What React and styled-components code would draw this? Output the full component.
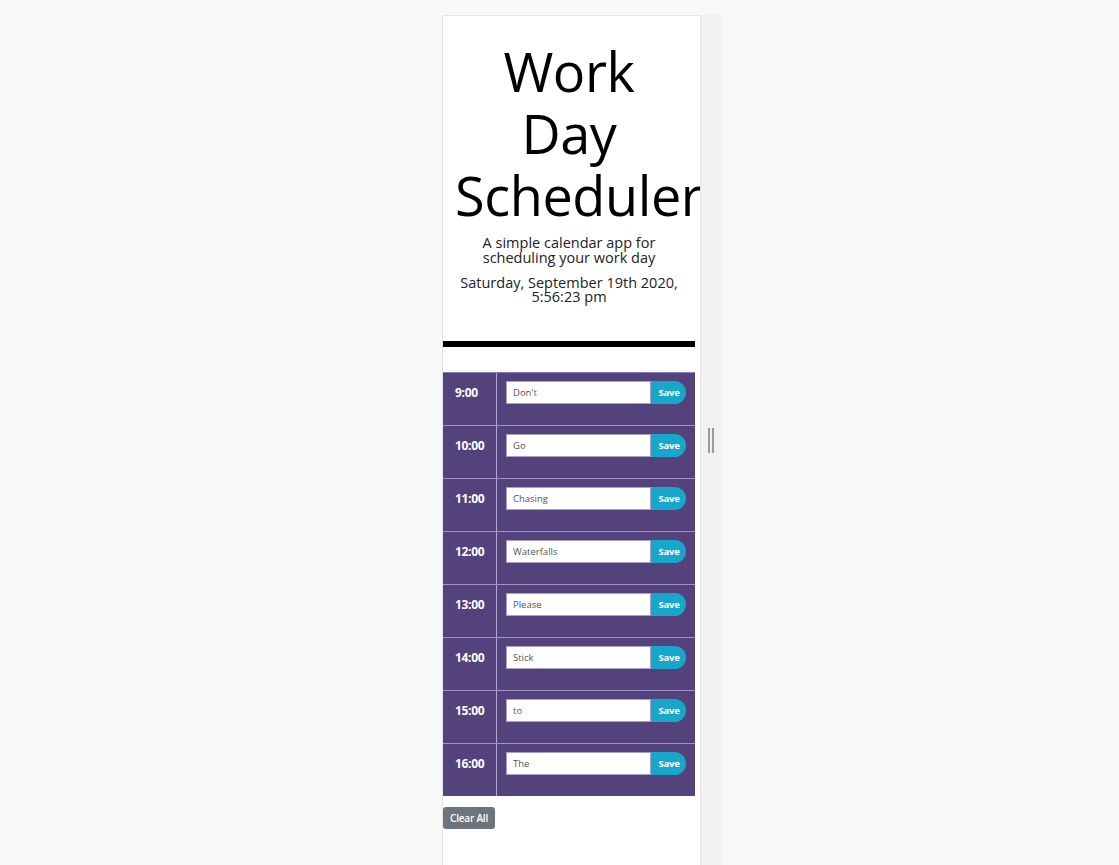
import React from "react";
import styled, { createGlobalStyle } from "styled-components";

const GlobalStyle = createGlobalStyle`
  html, body {
    margin: 0;
    padding: 0;
    background: #f8f8f8;
    font-family: "Open Sans", "Liberation Sans", sans-serif;
  }
`;

const Stage = styled.div`
  display: flex;
  align-items: stretch;
  padding: 15px 0 0 442px;
  height: 850px;
`;

const Frame = styled.div`
  width: 259px;
  background: #fff;
  border: 1px solid #e4e4e4;
  border-bottom: none;
  box-sizing: border-box;
  overflow: hidden;
`;

const Gutter = styled.div`
  width: 20px;
  background: #f1f1f1;
  display: flex;
  justify-content: center;
  gap: 2px;
  padding-top: 413px;
  box-sizing: border-box;
`;

const Grip = styled.span`
  width: 2px;
  height: 25px;
  background: #9a9a9a;
`;

const Header = styled.header`
  width: 252px;
  padding: 24px 12px 0;
  box-sizing: border-box;
  text-align: center;
  color: #000;
`;

const Title = styled.h1`
  margin: 0;
  font-size: 54px;
  font-weight: 400;
  line-height: 62px;
  letter-spacing: -0.4px;
  text-align: center;
`;

const Lead = styled.p`
  margin: ${(p) => p.$top}px -20px 0;
  font-size: 14.5px;
  line-height: ${(p) => p.$line}px;
  color: #222;
`;

const Rule = styled.div`
  width: 252px;
  height: 6px;
  background: #000;
  margin-top: 37px;
`;

const Table = styled.div`
  width: 252px;
  margin-top: 25px;
  background: #53427b;
`;

const Row = styled.div`
  display: flex;
  height: 53px;
  border-top: 1px solid #a094c8;
  box-sizing: border-box;
  &:first-child {
    border-top-color: #8a7db5;
  }
`;

const Hour = styled.div`
  width: 54px;
  border-right: 1px solid #b4aad6;
  box-sizing: border-box;
  color: #fff;
  font-weight: 700;
  font-size: 12px;
  padding: 11px 0 0 12px;
  letter-spacing: -0.3px;
`;

const Cell = styled.div`
  flex: 1;
  display: flex;
  align-items: flex-start;
  padding: 8px 0 0 9px;
`;

const Field = styled.input`
  width: 145px;
  height: 23px;
  box-sizing: border-box;
  border: 1px solid #a99fc9;
  background: #fff;
  font-family: "Open Sans", "Liberation Sans", sans-serif;
  font-size: 9.5px;
  color: #555;
  padding: 0 6px;
  outline: none;
`;

const SaveButton = styled.button`
  width: 35px;
  height: 23px;
  border: none;
  border-radius: 0 12px 12px 0;
  background: #17a7cb;
  color: #fff;
  font-family: "Open Sans", "Liberation Sans", sans-serif;
  font-weight: 700;
  font-size: 9.5px;
  padding: 0 0 0 1px;
  letter-spacing: -0.2px;
`;

const ClearButton = styled.button`
  margin-top: 11px;
  height: 22px;
  padding: 0 7px;
  border: none;
  border-radius: 3px;
  background: #6c757d;
  color: #fff;
  font-family: "Open Sans", "Liberation Sans", sans-serif;
  font-weight: 600;
  font-size: 10px;
  letter-spacing: -0.2px;
`;

const entries = [
  ["9:00", "Don't"],
  ["10:00", "Go"],
  ["11:00", "Chasing"],
  ["12:00", "Waterfalls"],
  ["13:00", "Please"],
  ["14:00", "Stick"],
  ["15:00", "to"],
  ["16:00", "The"],
];

export default function App() {
  return (
    <>
      <GlobalStyle />
      <Stage>
        <Frame>
          <Header>
            <Title>Work Day Scheduler</Title>
            <Lead $top={9} $line={15}>
              A simple calendar app for
              <br />
              scheduling your work day
            </Lead>
            <Lead $top={11} $line={14}>
              Saturday, September 19th 2020,
              <br />
              5:56:23 pm
            </Lead>
          </Header>
          <Rule />
          <Table>
            {entries.map(([hour, text]) => (
              <Row key={hour}>
                <Hour>{hour}</Hour>
                <Cell>
                  <Field defaultValue={text} />
                  <SaveButton>Save</SaveButton>
                </Cell>
              </Row>
            ))}
          </Table>
          <ClearButton>Clear All</ClearButton>
        </Frame>
        <Gutter>
          <Grip />
          <Grip />
        </Gutter>
      </Stage>
    </>
  );
}
